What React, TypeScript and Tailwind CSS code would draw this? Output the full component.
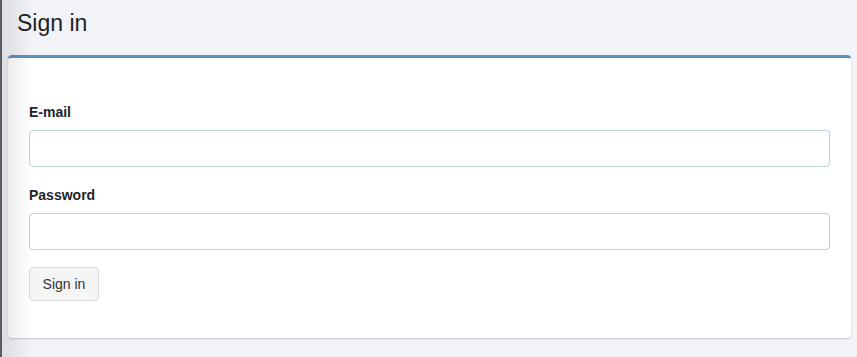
export default function App() {
  return (
    <div className="relative min-h-[357px] w-full overflow-hidden bg-[#f2f3f6] font-['Liberation_Sans',Arial,sans-serif] text-[#212529]">
      <div className="pointer-events-none absolute inset-y-0 left-0 z-10 flex">
        <div className="w-[2px] bg-[#5a5c60]" />
        <div className="w-[30px] bg-gradient-to-r from-[rgba(0,0,0,0.09)] to-transparent" />
      </div>

      <h1 className="pl-[17px] pt-[9px] text-[23px] leading-[28px] text-[#1f2226]">Sign in</h1>

      <div className="ml-[8px] mr-[6px] mt-[18px] rounded-[4px] border-t-[3px] border-[#5b93c7] bg-white px-[21px] pb-[37px] pt-[44px] shadow-[0_1px_2px_rgba(0,0,0,0.18)]">
        <form className="flex flex-col">
          <label className="text-[14px] font-bold leading-[20px]">E-mail</label>
          <input
            type="email"
            className="mt-[8px] h-[37px] w-full rounded-[4px] border border-[#b9d5e0] bg-white px-3 outline-none"
          />
          <label className="mt-[18px] text-[14px] font-bold leading-[20px]">Password</label>
          <input
            type="password"
            className="mt-[8px] h-[37px] w-full rounded-[4px] border border-[#cccccc] bg-white px-3 outline-none"
          />
          <div className="mt-[17px]">
            <button
              type="button"
              className="h-[34px] w-[70px] rounded-[4px] border border-[#dcdcdc] bg-[#f5f5f6] text-[14px] text-[#333]"
            >
              Sign in
            </button>
          </div>
        </form>
      </div>
    </div>
  )
}
